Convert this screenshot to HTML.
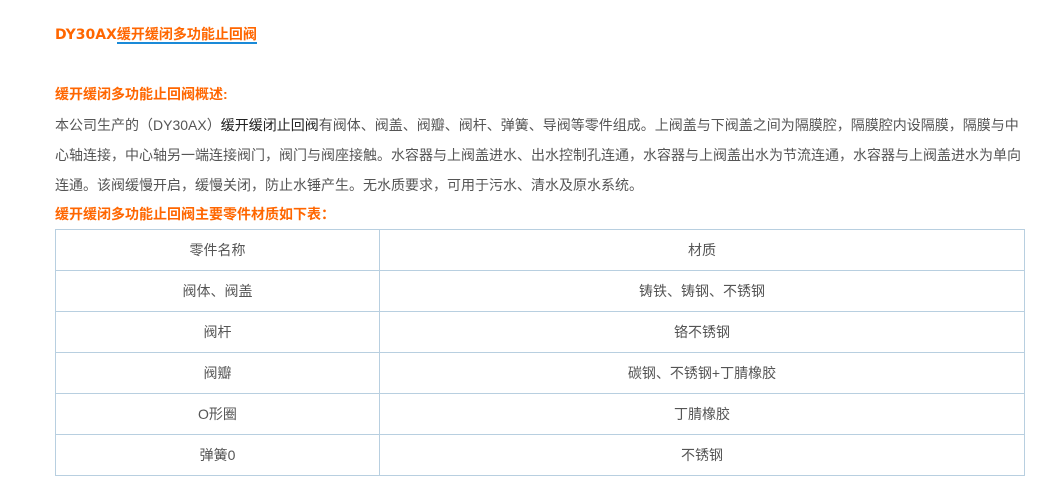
<!DOCTYPE html>
<html><head><meta charset="utf-8"><style>
body{margin:0;background:#fff;font-family:"Liberation Sans","Noto Sans CJK SC",sans-serif;color:#555;font-size:14px;}
.t{position:absolute;left:55px;top:24px;font-weight:bold;color:#ff6600;font-size:14px;line-height:20px;white-space:nowrap}
.t span{font-family:"DejaVu Sans",sans-serif;font-size:14px}
.t a{color:#ff6600;text-decoration:none;border-bottom:2px solid #1a8ad8}
.h{position:absolute;left:55px;font-weight:bold;color:#ff6600;white-space:nowrap;line-height:20px}
.p{position:absolute;left:55px;top:110px;line-height:30px;white-space:nowrap}
.p b{font-weight:normal;color:#222}
table{position:absolute;left:55px;top:229px;width:970px;border-collapse:collapse}
td{border:1px solid #b8cfe0;height:40px;text-align:center;padding:0;color:#555}
</style></head><body>
<div class="t"><span>DY30AX</span><a>缓开缓闭多功能止回阀</a></div>
<div class="h" style="top:84px">缓开缓闭多功能止回阀概述:</div>
<div class="p">本公司生产的（DY30AX）<b>缓开缓闭止回阀</b>有阀体、阀盖、阀瓣、阀杆、弹簧、导阀等零件组成。上阀盖与下阀盖之间为隔膜腔，隔膜腔内设隔膜，隔膜与中<br>心轴连接，中心轴另一端连接阀门，阀门与阀座接触。水容器与上阀盖进水、出水控制孔连通，水容器与上阀盖出水为节流连通，水容器与上阀盖进水为单向<br>连通。该阀缓慢开启，缓慢关闭，防止水锤产生。无水质要求，可用于污水、清水及原水系统。</div>
<div class="h" style="top:204px">缓开缓闭多功能止回阀主要零件材质如下表：</div>
<table>
<tr><td style="width:323px">零件名称</td><td>材质</td></tr>
<tr><td>阀体、阀盖</td><td>铸铁、铸钢、不锈钢</td></tr>
<tr><td>阀杆</td><td>铬不锈钢</td></tr>
<tr><td>阀瓣</td><td>碳钢、不锈钢+丁腈橡胶</td></tr>
<tr><td>O形圈</td><td>丁腈橡胶</td></tr>
<tr><td>弹簧0</td><td>不锈钢</td></tr>
</table>
</body></html>
